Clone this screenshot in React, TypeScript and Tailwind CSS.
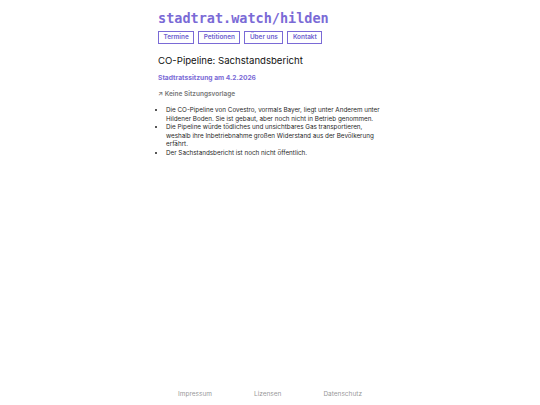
import React from 'react';

const navItems = ['Termine', 'Petitionen', 'Über uns', 'Kontakt'];

const points = [
  'Die CO-Pipeline von Covestro, vormals Bayer, liegt unter Anderem unter Hildener Boden. Sie ist gebaut, aber noch nicht in Betrieb genommen.',
  'Die Pipeline würde tödliches und unsichtbares Gas transportieren, weshalb ihre Inbetriebnahme großen Widerstand aus der Bevölkerung erfährt.',
  'Der Sachstandsbericht ist noch nicht öffentlich.',
];

const App: React.FC = () => {
  return (
    <div
      className="min-h-screen flex flex-col bg-white text-[#1a1a1a]"
      style={{ fontFamily: 'Inter, "Liberation Sans", sans-serif' }}
    >
      <main className="flex-1 w-[224px] mx-auto pt-[9px]">
        <h1
          className="text-[13.5px] leading-[18px] font-bold text-[#7a6ad6]"
          style={{ fontFamily: '"DejaVu Sans Mono", "Liberation Mono", monospace' }}
        >
          stadtrat.watch/hilden
        </h1>
        <nav className="flex gap-[4px] mt-[4px]">
          {navItems.map(item => (
            <a
              key={item}
              href="#"
              className="border border-[#7a6ad6] px-[4.5px] h-[13px] flex items-center text-[6.4px] font-semibold text-[#6e5fcf]"
            >
              {item}
            </a>
          ))}
        </nav>
        <h2 className="mt-[11px] text-[9.6px] leading-[12px] font-normal text-[#111]">
          CO-Pipeline: Sachstandsbericht
        </h2>
        <p className="mt-[7px] text-[6.7px] leading-[8px] font-bold text-[#7a6ad6]">Stadtratssitzung am 4.2.2026</p>
        <p className="mt-[8px] text-[6.5px] leading-[8px] font-semibold text-[#777]">↗ Keine Sitzungsvorlage</p>
        <ul className="mt-[8px] list-disc pl-[8px] text-[6.3px] leading-[8.6px] text-[#1f1f1f]">
          {points.map(p => (
            <li key={p}>{p}</li>
          ))}
        </ul>
      </main>
      <footer className="w-[226px] mx-auto flex justify-around pb-[7px] text-[6.5px] leading-[8px] text-[#999]">
        <a href="#">Impressum</a>
        <a href="#">Lizensen</a>
        <a href="#">Datenschutz</a>
      </footer>
    </div>
  );
};

export default App;
